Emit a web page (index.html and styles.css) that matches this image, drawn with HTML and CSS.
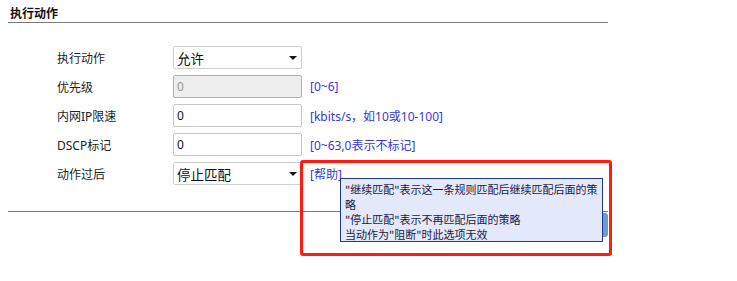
FILE: index.html
```html
<!DOCTYPE html>
<html>
<head>
<meta charset="utf-8">
<link rel="stylesheet" href="styles.css">
</head>
<body>
<div class="section">
  <div class="title">执行动作</div>
  <div class="form">
    <div class="row">
      <div class="label">执行动作</div>
      <div class="select"><span>允许</span><span class="arrow"></span></div>
    </div>
    <div class="row">
      <div class="label">优先级</div>
      <div class="input disabled">0</div>
      <div class="hint">[0~6]</div>
    </div>
    <div class="row">
      <div class="label">内网IP限速</div>
      <div class="input">0</div>
      <div class="hint">[kbits/s，如10或10-100]</div>
    </div>
    <div class="row">
      <div class="label">DSCP标记</div>
      <div class="input">0</div>
      <div class="hint">[0~63,0表示不标记]</div>
    </div>
    <div class="row">
      <div class="label">动作过后</div>
      <div class="select"><span>停止匹配</span><span class="arrow"></span></div>
      <div class="hint">[帮助]</div>
    </div>
  </div>
  <div class="footer">
    <div class="btn"></div>
  </div>
  <div class="tooltip">"继续匹配"表示这一条规则匹配后继续匹配后面的策<br>略<br>"停止匹配"表示不再匹配后面的策略<br>当动作为"阻断"时此选项无效</div>
  <div class="mark"></div>
</div>
</body>
</html>
```
FILE: styles.css
```css
html, body {
  margin: 0;
  padding: 0;
  background: #fff;
  height: 100%;
}
body {
  font-family: "Noto Sans", "Noto Sans CJK SC", sans-serif;
  color: #222;
}
.section {
  position: relative;
  width: 600px;
  min-height: 275px;
  margin-left: 8px;
  padding-top: 6px;
}
.title {
  font-size: 12px;
  font-weight: bold;
  color: #111;
  padding-left: 2px;
  height: 16px;
  line-height: 16px;
  border-bottom: 1px solid #7a7a7a;
}
.form {
  padding-top: 20px;
  padding-left: 49px;
}
.row {
  display: flex;
  align-items: center;
  height: 29px;
}
.label {
  width: 116px;
  font-size: 12px;
  color: #222;
}
.select, .input {
  box-sizing: border-box;
  width: 129px;
  height: 23px;
  border: 1px solid #cfcfcf;
  border-radius: 2px;
  background: #fff;
  display: flex;
  align-items: center;
  padding-left: 3px;
  color: #111;
}
.select {
  justify-content: space-between;
  padding-right: 4px;
  font-size: 13.5px;
}
.arrow {
  width: 0;
  height: 0;
  border-left: 4px solid transparent;
  border-right: 4px solid transparent;
  border-top: 4px solid #111;
}
.input {
  font-size: 12px;
  border-color: #c6c6c6;
}
.input.disabled {
  background: #eeeeee;
  border-color: #b0b0b0;
  color: #999;
}
.hint {
  margin-left: 8px;
  font-size: 12px;
  color: #3a36d8;
}
.footer {
  margin-top: 23px;
  border-top: 1px solid #7a7a7a;
  height: 40px;
  display: flex;
  justify-content: flex-end;
  padding-top: 1px;
}
.btn {
  width: 52px;
  height: 24px;
  background: #6b9bcf;
  border-radius: 3px;
}
.tooltip {
  position: absolute;
  left: 332px;
  top: 178px;
  box-sizing: border-box;
  width: 263px;
  height: 64px;
  background: #e4e8fb;
  border: 1px solid #1b3a8a;
  font-family: "Noto Sans CJK SC", sans-serif;
  font-size: 11px;
  line-height: 15px;
  color: #1a1a40;
  padding: 3px 4px;
  white-space: nowrap;
}
.mark {
  position: absolute;
  left: 292px;
  top: 160px;
  box-sizing: border-box;
  width: 312px;
  height: 96px;
  border: 3px solid #ff1a12;
  border-radius: 3px;
}
```
